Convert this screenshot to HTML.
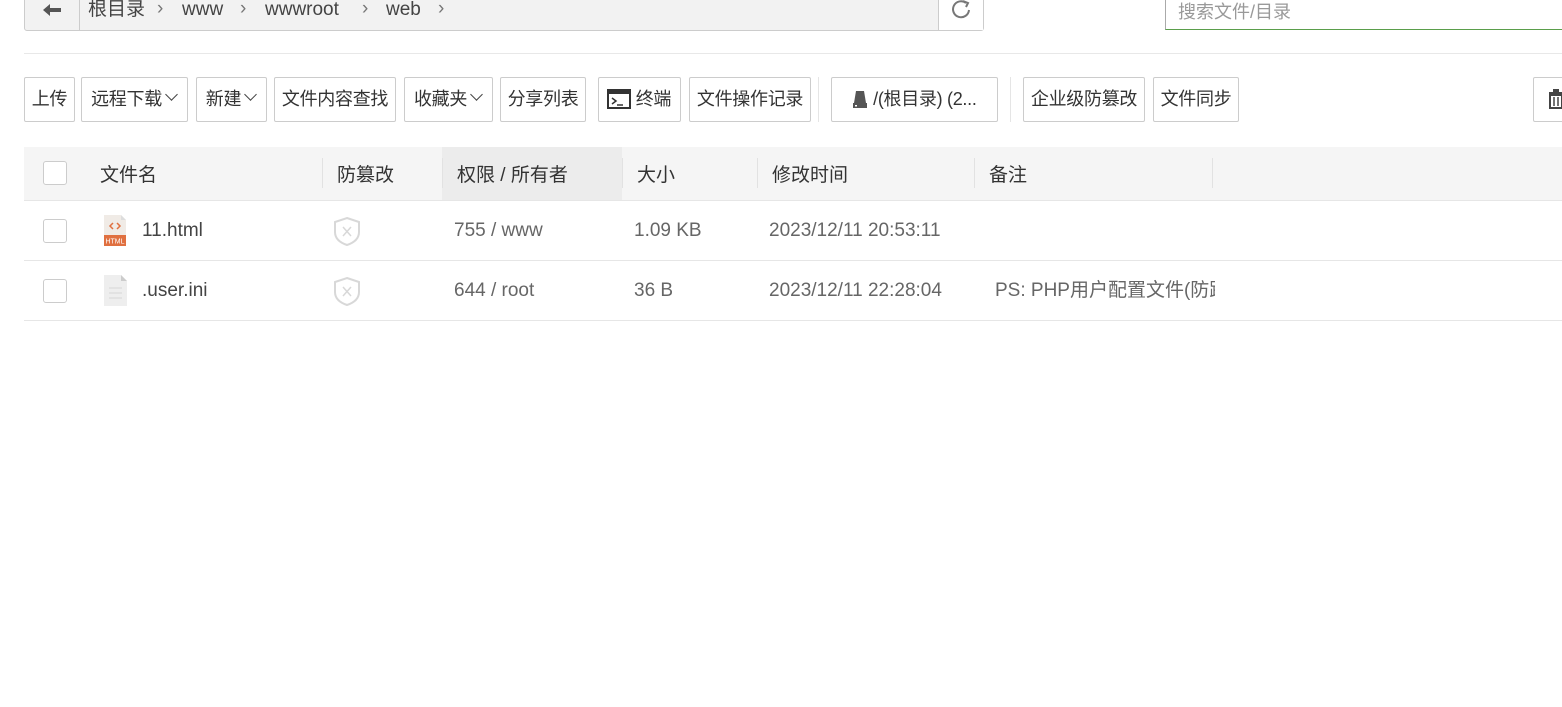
<!DOCTYPE html>
<html><head><meta charset="utf-8"><style>
*{box-sizing:border-box;margin:0;padding:0}
body{width:1562px;height:707px;background:#fff;font-family:"Liberation Sans","Noto Sans CJK SC",sans-serif;color:#333;position:relative;overflow:hidden;font-size:17px}
.a{position:absolute}
.bc{left:24px;top:-5px;width:960px;height:36px;border:1px solid #ccc;border-radius:0 0 3px 3px;background:#f2f2f2}
.btn{position:absolute;top:77px;height:45px;border:1px solid #ccc;border-radius:2px;background:#fff;font-size:18px;line-height:43px;text-align:center;color:#333;white-space:nowrap;letter-spacing:-0.3px}
.cb{position:absolute;left:43px;width:24px;height:24px;border:1px solid #ccc;border-radius:3px;background:#fff}
.hd{position:absolute;top:160px;font-size:19px;color:#333}
.sep{position:absolute;top:158px;width:1px;height:30px;background:#e2e2e2}
.td{position:absolute;font-size:19px;color:#666;line-height:24px;height:24px}
.chev{display:inline-block;width:9px;height:9px;border-right:1.5px solid #444;border-bottom:1.5px solid #444;transform:rotate(45deg);margin:0 2px 6px 5px}
.bt{position:absolute;top:-2px;font-size:19px;color:#444;line-height:24px;height:24px}
.ar{position:absolute;top:-3px;font-size:19px;color:#777;line-height:24px}
</style></head><body>
<div class="a bc"></div>
<div class="a" style="left:79px;top:-5px;width:1px;height:36px;background:#ccc"></div>
<div class="a" style="left:938px;top:-5px;width:1px;height:36px;background:#ccc"></div>
<div class="a" style="left:939px;top:-4px;width:44px;height:34px;background:#fff"></div>
<svg class="a" style="left:42px;top:3px" width="20" height="14"><path d="M1 7L8 1V5H19V9H8V13Z" fill="#555"/></svg>
<svg class="a" style="left:950px;top:-1px" width="22" height="22"><path d="M16 4A8 8 0 1 0 19 11" fill="none" stroke="#777" stroke-width="2"/><path d="M13 2L18 4L16 8" fill="none" stroke="#777" stroke-width="2"/></svg>
<div class="bt" style="left:88px">根目录</div><div class="ar" style="left:157px">›</div>
<div class="bt" style="left:182px">www</div><div class="ar" style="left:240px">›</div>
<div class="bt" style="left:265px">wwwroot</div><div class="ar" style="left:362px">›</div>
<div class="bt" style="left:386px">web</div><div class="ar" style="left:438px">›</div>
<div class="a" style="left:1165px;top:-5px;width:400px;height:35px;border:1px solid #aaa;border-bottom:1px solid #5a9e4b;background:#fff"></div>
<div class="a" style="left:1178px;top:-2px;font-size:18px;color:#999">搜索文件/目录</div>
<div class="a" style="left:24px;top:53px;width:1538px;height:1px;background:#e8e8e8"></div>

<div class="btn" style="left:24px;width:51px">上传</div>
<div class="btn" style="left:81px;width:107px">远程下载<span class="chev"></span></div>
<div class="btn" style="left:196px;width:71px">新建<span class="chev"></span></div>
<div class="btn" style="left:274px;width:122px">文件内容查找</div>
<div class="btn" style="left:404px;width:89px">收藏夹<span class="chev"></span></div>
<div class="btn" style="left:500px;width:86px">分享列表</div>
<div class="btn" style="left:598px;width:83px;text-align:left;padding-left:8px"><svg width="24" height="20" style="vertical-align:-4px"><rect x="1" y="1" width="22" height="18" fill="none" stroke="#333" stroke-width="2"/><rect x="1" y="1" width="22" height="4" fill="#333"/><path d="M5 9L9 12L5 15M10 16H16" fill="none" stroke="#333" stroke-width="1.5"/></svg> 终端</div>
<div class="btn" style="left:689px;width:122px">文件操作记录</div>
<div class="a" style="left:818px;top:77px;width:1px;height:45px;background:#e5e5e5"></div>
<div class="btn" style="left:831px;width:167px"><svg width="16" height="18" style="vertical-align:-3px"><path d="M4 1H12L14 13H2Z" fill="#555"/><rect x="1" y="13" width="14" height="5" fill="#555"/><rect x="3" y="15" width="2" height="1.5" fill="#fff"/></svg> /(根目录) (2...</div>
<div class="a" style="left:1010px;top:77px;width:1px;height:45px;background:#e5e5e5"></div>
<div class="btn" style="left:1023px;width:122px">企业级防篡改</div>
<div class="btn" style="left:1153px;width:86px">文件同步</div>
<div class="btn" style="left:1533px;width:40px;text-align:left;padding-left:14px"><svg width="16" height="20" style="vertical-align:-4px"><rect x="1" y="3" width="14" height="2" fill="#444"/><rect x="5" y="0" width="6" height="3" fill="#444"/><path d="M2 6H14V19H2Z" fill="none" stroke="#444" stroke-width="2"/><path d="M6 8V17M10 8V17" stroke="#444" stroke-width="1.5"/></svg></div>

<div class="a" style="left:24px;top:147px;width:1538px;height:54px;background:#f5f5f5;border-bottom:1px solid #e6e6e6"></div>
<div class="a" style="left:442px;top:147px;width:180px;height:53px;background:#ececec"></div>
<div class="cb" style="top:161px"></div>
<div class="hd" style="left:100px">文件名</div>
<div class="sep" style="left:322px"></div>
<div class="hd" style="left:337px">防篡改</div>
<div class="sep" style="left:442px"></div>
<div class="hd" style="left:457px">权限 / 所有者</div>
<div class="sep" style="left:622px"></div>
<div class="hd" style="left:637px">大小</div>
<div class="sep" style="left:757px"></div>
<div class="hd" style="left:772px">修改时间</div>
<div class="sep" style="left:974px"></div>
<div class="hd" style="left:989px">备注</div>
<div class="sep" style="left:1212px"></div>

<div class="a" style="left:24px;top:260px;width:1538px;height:1px;background:#e6e6e6"></div>
<div class="a" style="left:24px;top:320px;width:1538px;height:1px;background:#e6e6e6"></div>

<div class="cb" style="top:219px"></div>
<svg class="a" style="left:104px;top:215px" width="23" height="31"><path d="M0 0H17L22 5V31H0Z" fill="#f0ebe6"/><path d="M17 0V5H22Z" fill="#ddd"/><path d="M9 8L6 11L9 14M13 8L16 11L13 14" fill="none" stroke="#e07040" stroke-width="1.5"/><rect x="0" y="20" width="22" height="11" fill="#e07040"/><text x="11" y="28.5" font-size="7" fill="#fff" text-anchor="middle" font-family="Liberation Sans">HTML</text></svg>
<div class="td" style="left:142px;top:219px;color:#444">11.html</div>
<svg class="a" style="left:333px;top:216px" width="28" height="31"><path d="M14 2L26 6V16C26 23 20 27 14 29C8 27 2 23 2 16V6Z" fill="none" stroke="#d8d8d8" stroke-width="2"/><path d="M10 11L18 20M18 11L10 20" stroke="#d8d8d8" stroke-width="1.5"/></svg>
<div class="td" style="left:454px;top:219px">755 / www</div>
<div class="td" style="left:634px;top:219px">1.09 KB</div>
<div class="td" style="left:769px;top:219px">2023/12/11 20:53:11</div>

<div class="cb" style="top:279px"></div>
<svg class="a" style="left:104px;top:275px" width="23" height="31"><path d="M0 0H17L23 6V31H0Z" fill="#eee"/><path d="M17 0V6H23Z" fill="#ccc"/><path d="M5 13H18M5 18H18M5 23H18" stroke="#ddd" stroke-width="1.5"/></svg>
<div class="td" style="left:142px;top:279px;color:#444">.user.ini</div>
<svg class="a" style="left:333px;top:276px" width="28" height="31"><path d="M14 2L26 6V16C26 23 20 27 14 29C8 27 2 23 2 16V6Z" fill="none" stroke="#d8d8d8" stroke-width="2"/><path d="M10 11L18 20M18 11L10 20" stroke="#d8d8d8" stroke-width="1.5"/></svg>
<div class="td" style="left:454px;top:279px">644 / root</div>
<div class="td" style="left:634px;top:279px">36 B</div>
<div class="td" style="left:769px;top:279px">2023/12/11 22:28:04</div>
<div class="td" style="left:995px;top:279px;width:220px;overflow:hidden;white-space:nowrap">PS: PHP用户配置文件(防跨站)</div>
</body></html>
